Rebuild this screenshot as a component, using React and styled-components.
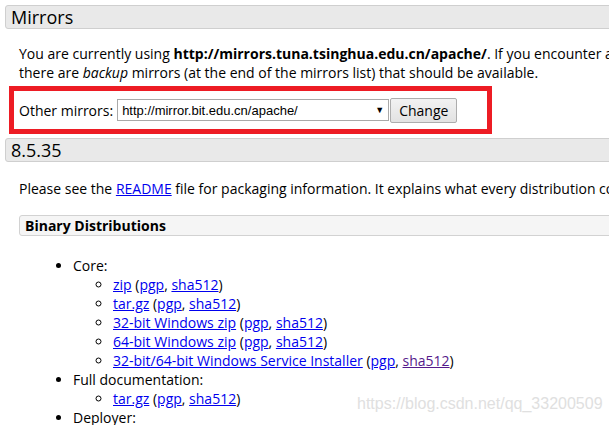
import React from 'react';
import styled, { createGlobalStyle } from 'styled-components';

const GlobalStyle = createGlobalStyle`
  html, body {
    margin: 0;
    padding: 0;
    background: #ffffff;
    overflow: hidden;
  }
  body {
    font-family: 'Open Sans', 'Liberation Sans', sans-serif;
    font-size: 14px;
    color: #000;
  }
`;

const Page = styled.div`
  position: relative;
  width: 609px;
  height: 425px;
  padding: 5px 0 0 5px;
  box-sizing: border-box;
  overflow: hidden;
`;

const SectionHeader = styled.div`
  width: 640px;
  height: 24px;
  box-sizing: border-box;
  border: 1px solid #cfcfcf;
  border-radius: 3px;
  background: #e9e9e9;
  padding-left: 5px;
  font-size: 18px;
  line-height: 22px;
`;

const Paragraph = styled.p`
  margin: 0 0 0 14px;
  line-height: 19px;
  white-space: nowrap;
  padding-top: ${props => props.top || 0}px;
`;

const MirrorBox = styled.form`
  width: 483px;
  height: 48px;
  box-sizing: border-box;
  margin: 4px 0 4px 4px;
  border: 5px solid #ed1c24;
  display: flex;
  align-items: center;
  padding-left: 5px;
`;

const Label = styled.span`
  margin-right: 4px;
`;

const FakeSelect = styled.div`
  width: 272px;
  height: 22px;
  box-sizing: border-box;
  border: 1px solid #a9a9a9;
  background: #fff;
  display: flex;
  align-items: center;
  justify-content: space-between;
  padding: 0 4px;
  font-family: 'Liberation Sans', Arial, sans-serif;
  font-size: 13px;
`;

const Arrow = styled.span`
  font-size: 9px;
`;

const Button = styled.button`
  height: 25px;
  margin-left: 1px;
  padding: 0 8px;
  border: 1px solid #adadad;
  border-radius: 2px;
  background: linear-gradient(#f2f2f2, #e2e2e2);
  font-family: 'Open Sans', 'Liberation Sans', sans-serif;
  font-size: 14px;
  color: #000;
`;

const Link = styled.a`
  text-decoration: underline;
  color: ${props => (props.visited ? '#551a8b' : '#0000ee')};
`;

const SubHeader = styled.div`
  width: 620px;
  margin: 17px 0 0 14px;
  height: 21px;
  box-sizing: border-box;
  border: 1px solid #d2d2d2;
  border-radius: 3px;
  background: #f5f5f5;
  padding-left: 5px;
  font-weight: 700;
  line-height: 19px;
`;

const List = styled.ul`
  margin: 20px 0 0 0;
  padding-left: 68px;
  list-style: disc;
  line-height: 19px;
`;

const SubList = styled.ul`
  margin: 0;
  padding-left: 40px;
  list-style: circle;
`;

const Watermark = styled.div`
  position: absolute;
  left: 357px;
  top: 395px;
  font-family: 'Liberation Sans', Arial, sans-serif;
  font-size: 16px;
  color: #e0e0e0;
`;

const Item = ({ name, visitedSha }) => (
  <li>
    <Link href="#">{name}</Link> (<Link href="#">pgp</Link>,{' '}
    <Link href="#" visited={visitedSha}>sha512</Link>)
  </li>
);

const App = () => (
  <>
    <GlobalStyle />
    <Page>
      <SectionHeader>Mirrors</SectionHeader>
      <Paragraph top={15}>
        You are currently using <b>http://mirrors.tuna.tsinghua.edu.cn/apache/</b>. If you encounter a problem
        <br />
        there are <i>backup</i> mirrors (at the end of the mirrors list) that should be available.
      </Paragraph>
      <MirrorBox onSubmit={e => e.preventDefault()}>
        <Label>Other mirrors:</Label>
        <FakeSelect>
          <span>http://mirror.bit.edu.cn/apache/</span>
          <Arrow>▼</Arrow>
        </FakeSelect>
        <Button type="button">Change</Button>
      </MirrorBox>
      <SectionHeader>8.5.35</SectionHeader>
      <Paragraph top={17}>
        Please see the <Link href="#">README</Link> file for packaging information. It explains what every distribution contains.
      </Paragraph>
      <SubHeader>Binary Distributions</SubHeader>
      <List>
        <li>
          Core:
          <SubList>
            <Item name="zip" />
            <Item name="tar.gz" />
            <Item name="32-bit Windows zip" />
            <Item name="64-bit Windows zip" />
            <Item name="32-bit/64-bit Windows Service Installer" visitedSha />
          </SubList>
        </li>
        <li>
          Full documentation:
          <SubList>
            <Item name="tar.gz" />
          </SubList>
        </li>
        <li>Deployer:</li>
      </List>
      <Watermark>https://blog.csdn.net/qq_33200509</Watermark>
    </Page>
  </>
);

export default App;
